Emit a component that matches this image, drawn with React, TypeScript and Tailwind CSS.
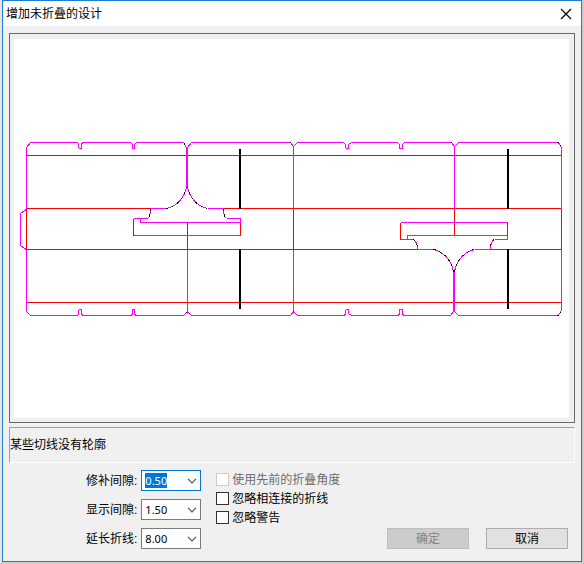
import { useEffect, useRef, useState } from 'react';

type FieldKey = 'repair' | 'display' | 'extend';

interface ComboBoxProps {
  id: string;
  value: string;
  options: string[];
  autoSelect?: boolean;
  onChange: (value: string) => void;
}

const FIELDS: { key: FieldKey; label: string; options: string[] }[] = [
  { key: 'repair', label: '修补间隙:', options: ['0.25', '0.50', '1.00'] },
  { key: 'display', label: '显示间隙:', options: ['1.00', '1.50', '2.00'] },
  { key: 'extend', label: '延长折线:', options: ['4.00', '8.00', '12.00'] },
];

const CHECKS = [
  { id: 'use-angle', label: '使用先前的折叠角度', disabled: true },
  { id: 'ignore-crease', label: '忽略相连接的折线', disabled: false },
  { id: 'ignore-warning', label: '忽略警告', disabled: false },
];

// Outer cut contour, top and bottom edge
const CUT_TOP =
  'M26 208V147L30 142H77L78 143V147L79 148H81V143L83 142H130L132 144V148H134V144L136 142H183L186 147' +
  'M187 147L191 142H290L293 146L297 142H343L345 144V147L346 148H348V144L351 142H397L399 144V148H402V144L404 142H451L454 146L458 142H557L559 143L561 148V208';
const CUT_BOTTOM =
  'M26 249V311L30 315H77L78 314V310L79 309H81V314L83 315H130L132 314V309H134V314L136 315H183L187 311' +
  'L191 315H290L293 311L297 315H343L345 314V310L346 309H348V313L351 315H397L399 314V309H402V314L404 315H450L453 311' +
  'M454 311L458 315H557L559 314L561 309V249';

const FOLDS =
  'M26 155H561M26 302H561M26 208H150M223 208H561M26 249H417M490 249H561' +
  'M26 208V249M293 208V249M561 208V249M187 222V249M454 208V235' +
  'M133 218V235M240 222V235M400 222V239M507 222V235';

const CUTS =
  'M26 209L24 210L20 213V245L24 248L26 249' +
  'M187 249V313M293 146V208M293 249V312M454 146V208' +
  'M166 208H150M207 208H223M147 218H133M226 218H240V222H140V218M133 235H240' +
  'M433 249H417M474 249H490M413 239H400M494 239H507V235H407V239M400 222H507';

const ARCS =
  'M186 186C185 195 177 206 166 208M187 186C188 195 196 206 207 208' +
  'M150 208C150 214 149 217 147 218M223 208C223 213 224 217 226 218' +
  'M433 249C443 251 452 261 453 272M474 249C464 251 455 261 454 272' +
  'M413 239C416 241 417 244 417 249M494 239C491 240 490 244 490 249';

const CORNERS =
  'M184 143L186 147M290 142L293 146L297 142M451 142L454 146L458 142M557 142L559 143L561 147' +
  'M183 315L187 311L191 315M290 315L293 311L297 315M557 315L559 314L561 310';

function DesignPreview() {
  return (
    <svg viewBox="14 39 555 379" className="block w-full bg-white" role="img" aria-label="design" shapeRendering="crispEdges">
      <g transform="translate(0.5 0.5)" fill="none" strokeWidth="1">
        <path d={FOLDS} stroke="#ff0000" />
        <path d={CUTS} stroke="#ff00ff" />
        <path d={CUT_TOP} stroke="#ff00ff" />
        <path d={CUT_BOTTOM} stroke="#ff00ff" />
        <path d={ARCS} stroke="#ff00ff" />
        <path d={ARCS} stroke="#000000" strokeDasharray="2 4" />
        <path d={CORNERS} stroke="#000000" strokeDasharray="1 3" />
      </g>
      {/* slots are double lines */}
      <path d="M187 147V187M454 272V312" stroke="#ff00ff" strokeWidth="2" fill="none" />
      <path d="M240 149V209M240 249V309M508 149V209M508 249V309" stroke="#000000" strokeWidth="2" fill="none" />
    </svg>
  );
}

function ComboBox({ id, value, options, autoSelect, onChange }: ComboBoxProps) {
  const [open, setOpen] = useState(false);
  const inputRef = useRef<HTMLInputElement>(null);

  useEffect(() => {
    if (autoSelect) {
      inputRef.current?.focus();
      inputRef.current?.select();
    }
  }, [autoSelect]);

  return (
    <div className="relative flex h-[21px] w-[60px] border border-[#7a7a7a] bg-white focus-within:border-[#0078d7]">
      <input
        ref={inputRef}
        id={id}
        value={value}
        role="combobox"
        aria-expanded={open}
        onChange={(e) => onChange(e.target.value)}
        className="w-0 min-w-0 flex-1 bg-transparent pl-[3px] font-['Noto_Sans',sans-serif] text-[11px] leading-[15px] outline-none selection:bg-[#0078d7] selection:text-white"
      />
      <button
        type="button"
        aria-label="展开"
        onClick={() => setOpen(!open)}
        className="flex w-4 items-center justify-center"
      >
        <svg width="10" height="6" viewBox="0 0 10 6" fill="none" stroke="#555555" strokeWidth="1.2">
          <path d="M1 0.8L5 4.8L9 0.8" />
        </svg>
      </button>
      {open && (
        <ul className="absolute top-full left-0 z-10 w-full border border-[#7a7a7a] bg-white text-[11px]">
          {options.map((option) => (
            <li key={option}>
              <button
                type="button"
                className="w-full px-1 text-left hover:bg-[#0078d7] hover:text-white"
                onClick={() => {
                  onChange(option);
                  setOpen(false);
                }}
              >
                {option}
              </button>
            </li>
          ))}
        </ul>
      )}
    </div>
  );
}

export default function App() {
  const [values, setValues] = useState<Record<FieldKey, string>>({
    repair: '0.50',
    display: '1.50',
    extend: '8.00',
  });

  return (
    <div className="border-x-2 border-b-2 border-r-[#cdcdcd] border-b-[#cdcdcd] border-l-[#e6e6e6] font-['Liberation_Sans','Noto_Sans_CJK_SC',sans-serif] text-xs text-black">
      <div className="border border-[#1a7fd4] bg-[#f0f0f0]">
        <header className="flex h-[25px] items-center justify-between bg-white pr-[9px] pl-[3px]">
          <h1>增加未折叠的设计</h1>
          <button type="button" aria-label="关闭">
            <svg width="12" height="12" viewBox="0 0 12 12" stroke="#000000" strokeWidth="1.2">
              <path d="M1 1L11 11M11 1L1 11" />
            </svg>
          </button>
        </header>

        <main className="px-[6px] pt-[7px] pb-3">
          <div className="border border-[#696969] pt-[5px] pr-[5px] pb-1 pl-1">
            <DesignPreview />
          </div>

          <p className="mt-1 flex h-9 items-center border border-t-[#a0a0a0] border-r-white border-b-white border-l-[#a0a0a0]">
            某些切线没有轮廓
          </p>

          <form className="mt-[7px] flex items-end pr-[7px] pl-[77px]" onSubmit={(e) => e.preventDefault()}>
            <div className="flex flex-col gap-2">
              {FIELDS.map(({ key, label, options }, i) => (
                <div key={key} className="flex items-center justify-end gap-1">
                  <label htmlFor={key} className="whitespace-nowrap">
                    {label}
                  </label>
                  <ComboBox
                    id={key}
                    value={values[key]}
                    options={options}
                    autoSelect={i === 0}
                    onChange={(v) => setValues({ ...values, [key]: v })}
                  />
                </div>
              ))}
            </div>

            <div className="ml-[15px] flex flex-col self-start">
              {CHECKS.map(({ id, label, disabled }) => (
                <div key={id} className="flex h-[19px] items-center gap-[3px]">
                  <input
                    id={id}
                    type="checkbox"
                    disabled={disabled}
                    className="size-[13px] shrink-0 appearance-none border border-[#333333] bg-white checked:bg-[#0078d7] disabled:border-[#cccccc]"
                  />
                  <label htmlFor={id} className={disabled ? 'whitespace-nowrap text-[#6d6d6d]' : 'whitespace-nowrap'}>
                    {label}
                  </label>
                </div>
              ))}
            </div>

            <div className="ml-auto flex gap-[17px]">
              <button
                type="submit"
                disabled
                className="h-[21px] w-[82px] border border-[#bfbfbf] bg-[#cccccc] leading-none text-[#838383]"
              >
                确定
              </button>
              <button type="button" className="h-[21px] w-[82px] border border-[#adadad] bg-[#e1e1e1] leading-none">
                取消
              </button>
            </div>
          </form>
        </main>
      </div>
    </div>
  );
}
